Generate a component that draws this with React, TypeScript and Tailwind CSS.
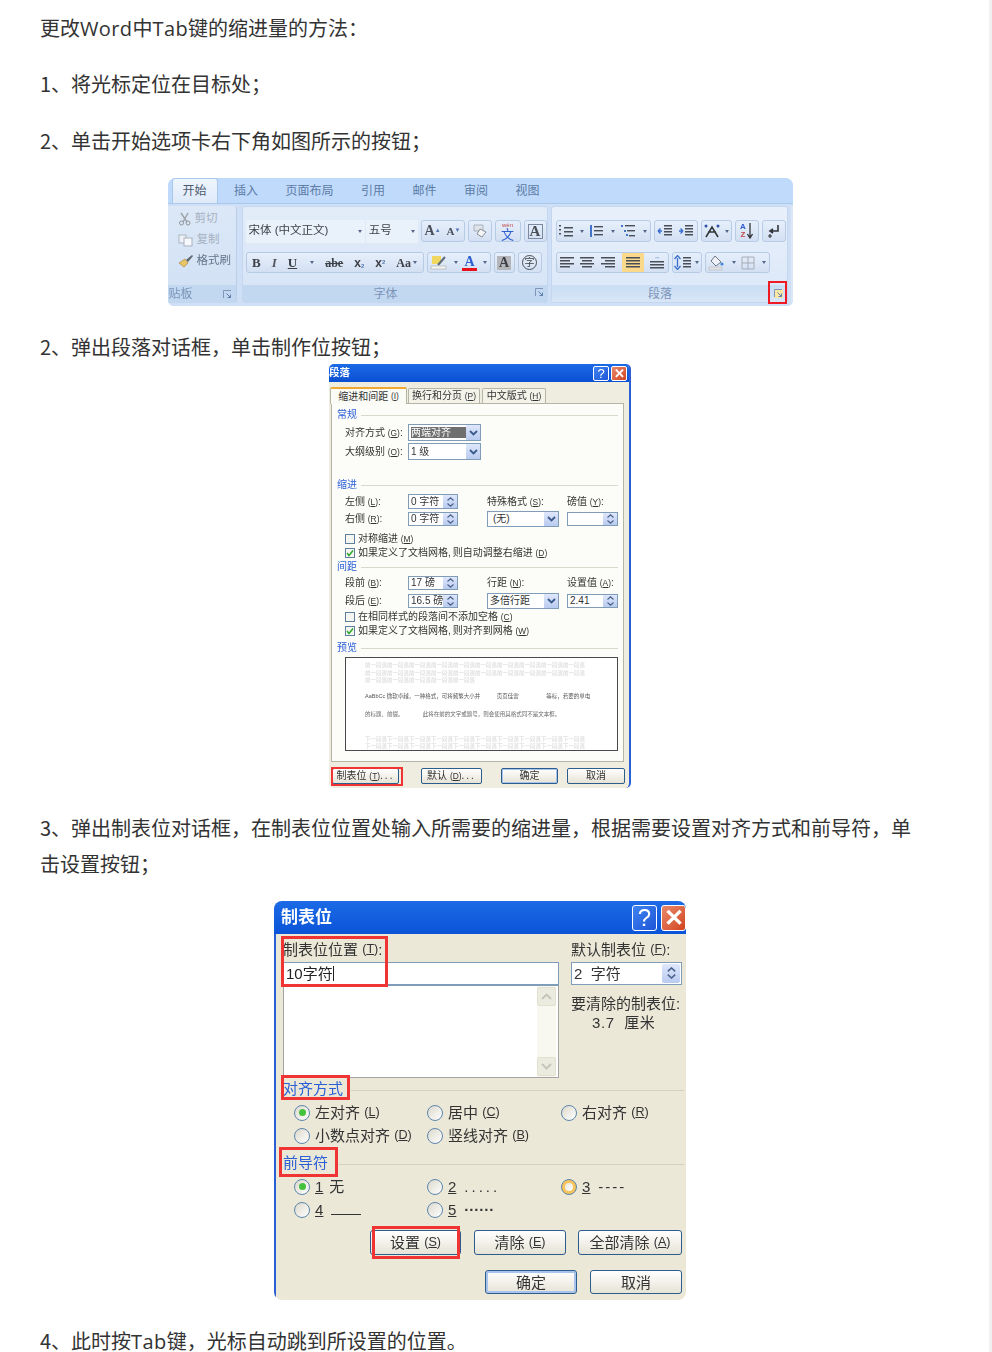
import React from "react";

function K({ c }: { c: string }) {
  return <span className="text-[0.84em]">(<u>{c}</u>)</span>;
}

function NC() {
  return <span className="pr-[2px]">,</span>;
}

function Chev({ className = "" }: { className?: string }) {
  return (
    <svg width="9" height="6" viewBox="0 0 9 6" className={className}>
      <path d="M1 1 L4.5 4.5 L8 1" fill="none" stroke="#3b5a8c" strokeWidth="1.8" />
    </svg>
  );
}

function Spin() {
  return (
    <span className="w-[14px] h-full bg-linear-to-b from-[#dfe7fb] to-[#b9cbf0] flex flex-col items-center justify-center gap-[2px] shrink-0">
      <svg width="7" height="4" viewBox="0 0 7 4"><path d="M0.5 3.5 L3.5 0.8 L6.5 3.5" fill="none" stroke="#4a628c" strokeWidth="1.2" /></svg>
      <svg width="7" height="4" viewBox="0 0 7 4"><path d="M0.5 0.5 L3.5 3.2 L6.5 0.5" fill="none" stroke="#4a628c" strokeWidth="1.2" /></svg>
    </span>
  );
}

function ComboBtn() {
  return (
    <span className="w-[14px] h-full bg-linear-to-b from-[#dfe7fb] to-[#b9cbf0] flex items-center justify-center shrink-0">
      <Chev />
    </span>
  );
}

function Dd() {
  return <span className="w-0 h-0 border-x-[2.5px] border-t-[3px] border-x-transparent border-t-[#55688a] ml-[2px] shrink-0" />;
}

function Grp({ w, children }: { w: string; children: React.ReactNode }) {
  return (
    <div className={`${w} h-full rounded-[3px] border border-[#b7cbe6] bg-linear-to-b from-[#e6effb] to-[#d3e0f3] flex items-center justify-around overflow-hidden`}>
      {children}
    </div>
  );
}

function Lines({ widths, x = 0, w = 14, color = "#4a4f57", step = 3, h = 14 }: { widths: number[]; x?: number[] | number; w?: number; color?: string; step?: number; h?: number }) {
  return (
    <svg width={w} height={h} viewBox={`0 0 ${w} ${h}`}>
      {widths.map((l, i) => {
        const sx = Array.isArray(x) ? x[i] : x;
        return <rect key={i} x={sx} y={1 + i * step} width={l} height="1.5" fill={color} />;
      })}
    </svg>
  );
}

function Launcher({ hot = false }: { hot?: boolean }) {
  return (
    <svg width="9" height="9" viewBox="0 0 9 9" className={hot ? "bg-[#fbe7a5]" : ""}>
      <path d="M0.5 8 V0.5 H8" stroke="#7f96b6" fill="none" />
      <path d="M3.5 3.5 L7.5 7.5 M7.5 4.5 V7.5 H4.5" stroke="#5f7ea8" fill="none" />
    </svg>
  );
}

function Ribbon() {
  const tabs = ["插入", "页面布局", "引用", "邮件", "审阅", "视图"];
  return (
    <div className="relative w-[625px] h-[128px] mx-auto">
      <div className="w-full h-full rounded-t-[8px] rounded-b-[6px] bg-[#c6dcf6] overflow-hidden blur-[0.4px] leading-none font-['Liberation_Sans','Noto_Sans_CJK_SC',sans-serif]">
        <div className="h-[26px] bg-[#bfdafb] flex items-end pl-[4px] border-b border-[#a8c8ec]">
          <div className="w-[46px] h-[25px] rounded-t-[3px] bg-linear-to-b from-[#eef5fd] to-[#dfeafa] border border-b-0 border-[#a8c8ec] text-[12px] text-[#4c5a6e] flex items-center justify-center">开始</div>
          <div className="flex h-[25px] items-center gap-[27.5px] ml-[16.5px] text-[12px] text-[#5d7ca6]">
            {tabs.map((t) => <span key={t}>{t}</span>)}
          </div>
        </div>
        <div className="h-[102px] flex pt-[2px] pb-[3px] bg-[#cfe0f6]">
          {/* clipboard */}
          <div className="w-[69px] h-full rounded-r-[3px] bg-linear-to-b from-[#dce8f7] to-[#d0e0f4] border-r border-[#b9cfea] flex flex-col">
            <div className="h-[79px] pt-[2px] pl-[10px] text-[11.5px] flex flex-col">
              <div className="h-[21px] flex items-center gap-[3px] text-[#a6b1c2]">
                <svg width="14" height="14" viewBox="0 0 14 14"><path d="M3 1 L9 10 M10 1 L5 10" stroke="#a0a4ab" strokeWidth="1.5" fill="none" /><circle cx="3.5" cy="11" r="2" stroke="#8f939a" fill="none" /><circle cx="10" cy="11" r="2" stroke="#8f939a" fill="none" /></svg>
                <span>剪切</span>
              </div>
              <div className="h-[21px] flex items-center gap-[3px] text-[#a6b1c2]">
                <svg width="16" height="14" viewBox="0 0 16 14"><rect x="1" y="2" width="7" height="8" fill="#eef2f8" stroke="#aab3bf" /><rect x="6" y="5" width="8" height="8" fill="#f6f8fc" stroke="#aab3bf" /></svg>
                <span>复制</span>
              </div>
              <div className="h-[21px] flex items-center gap-[3px] text-[#65758c]">
                <svg width="16" height="14" viewBox="0 0 16 14"><path d="M1 9 L7 5 L10 9 L6 13 Z" fill="#e8c667" stroke="#a98a35" strokeWidth="0.7" /><path d="M8 6 L14 1 L15 2 L10 8 Z" fill="#5f6670" /></svg>
                <span>格式刷</span>
              </div>
            </div>
            <div className="flex-1 bg-[#c2d8f1] flex items-center justify-between pl-[1px] pr-[4px] text-[12px] text-[#7d94b8]">
              <span>贴板</span>
              <Launcher />
            </div>
          </div>
          {/* font */}
          <div className="w-[306px] ml-[5px] h-full rounded-[3px] bg-linear-to-b from-[#e2ecf9] to-[#d6e4f6] border border-[#c4d7ef] flex flex-col">
            <div className="h-[78px] pl-[3px] flex flex-col">
              <div className="mt-[12px] h-[24px] flex items-center">
                <div className="w-[120px] h-[23px] bg-[#e9f1fb] flex items-center justify-between px-[3px] text-[11.5px] text-[#40434a]"><span>宋体 (中文正文)</span><Dd /></div>
                <div className="w-[52px] ml-[1px] h-[23px] bg-[#e9f1fb] flex items-center justify-between px-[3px] text-[11.5px] text-[#40434a] mr-[3px]"><span>五号</span><Dd /></div>
                <div className="h-[22px] flex gap-[3px]">
                  <Grp w="w-[44px]">
                    <span className="font-['Liberation_Serif'] font-bold text-[14px] text-[#4a4f57] leading-none">A<sup className="text-[6px] text-[#5679b0]">▲</sup></span>
                    <span className="font-['Liberation_Serif'] font-bold text-[11px] text-[#4a4f57] leading-none">A<sup className="text-[6px] text-[#5679b0]">▼</sup></span>
                  </Grp>
                  <Grp w="w-[24px]">
                    <svg width="18" height="16" viewBox="0 0 18 16"><path d="M3 2 H12 V8 H3 Z" fill="#dfe4ea" stroke="#9aa4b2" strokeWidth="0.8" /><path d="M9 6 L15 9 L11 14 L6 11 Z" fill="#f3f4f6" stroke="#8b8f96" /></svg>
                  </Grp>
                  <Grp w="w-[26px]">
                    <div className="flex flex-col items-center leading-none"><span className="text-[6px] leading-[6px] text-[#c14a4a]">wén</span><span className="text-[13px] text-[#2d5ed0] leading-[13px]">文</span></div>
                  </Grp>
                  <Grp w="w-[23px]"><span className="font-['Liberation_Serif'] font-bold text-[15px] text-[#4a4f57] border border-[#7b8a9f] w-[15px] h-[15px] flex items-center justify-center leading-none">A</span></Grp>
                </div>
              </div>
              <div className="mt-[9px] h-[21px] flex items-center gap-[3px]">
                <Grp w="w-[178px]">
                  <span className="font-['Liberation_Serif'] font-bold text-[13px] text-[#3d4046]">B</span>
                  <span className="font-['Liberation_Serif'] italic font-bold text-[13px] text-[#55585e]">I</span>
                  <span className="font-['Liberation_Serif'] font-bold text-[13px] text-[#3d4046] underline">U</span>
                  <Dd />
                  <span className="font-['Liberation_Serif'] font-bold text-[12px] text-[#3d4046] line-through">abe</span>
                  <span className="font-['Liberation_Sans'] font-bold text-[12px] text-[#3d4046]">x<sub className="text-[6px] text-[#5679b0]">2</sub></span>
                  <span className="font-['Liberation_Sans'] font-bold text-[12px] text-[#3d4046]">x<sup className="text-[6px] text-[#5679b0]">2</sup></span>
                  <span className="font-['Liberation_Serif'] font-bold text-[12px] text-[#3d4046] flex items-center">Aa<Dd /></span>
                </Grp>
                <Grp w="w-[64px]">
                  <svg width="18" height="16" viewBox="0 0 18 16"><rect x="2" y="1" width="9" height="8" fill="#f0d860" /><path d="M8 10 L15 2" stroke="#5d6b80" strokeWidth="2" /><rect x="1" y="11" width="15" height="3" fill="#f4f4f2" stroke="#a5a8ac" strokeWidth="0.6" /></svg>
                  <Dd />
                  <div className="flex flex-col items-center leading-none"><span className="font-['Liberation_Serif'] font-bold text-[14px] text-[#2d5ed0] leading-[13px]">A</span><span className="w-[15px] h-[3px] bg-[#e8101a]" /></div>
                  <Dd />
                </Grp>
                <Grp w="w-[21px]"><span className="font-['Liberation_Serif'] font-bold text-[14px] text-[#3d4046] bg-[#b4b6ba] w-[14px] h-[14px] flex items-center justify-center leading-none">A</span></Grp>
                <Grp w="w-[24px]"><span className="rounded-full border border-[#4a4f57] w-[15px] h-[15px] flex items-center justify-center text-[10px] leading-none text-[#3d4046]">字</span></Grp>
              </div>
            </div>
            <div className="flex-1 bg-[#c2d8f1] flex items-center justify-center pr-[18px] relative text-[12px] text-[#7d94b8]">
              <span>字体</span>
              <span className="absolute right-[3px] top-[3px]"><Launcher /></span>
            </div>
          </div>
          {/* paragraph */}
          <div className="w-[237px] ml-[3px] h-full rounded-[3px] bg-linear-to-b from-[#e8f0fb] to-[#dbe7f8] border border-[#c4d7ef] flex flex-col">
            <div className="h-[78px] pl-[4px] flex flex-col">
              <div className="mt-[13px] h-[22px] flex items-center gap-[3px]">
                <Grp w="w-[95px]">
                  <Lines widths={[2, 9, 2, 9, 2, 9]} x={[0, 5, 0, 5, 0, 5]} step={2} />
                  <Dd />
                  <svg width="14" height="14" viewBox="0 0 14 14"><rect x="5" y="2" width="9" height="1.4" fill="#4a4f57" /><rect x="5" y="6" width="9" height="1.4" fill="#4a4f57" /><rect x="5" y="10" width="9" height="1.4" fill="#4a4f57" /><rect x="1" y="1" width="2" height="12" fill="#4374c8" /></svg>
                  <Dd />
                  <svg width="16" height="14" viewBox="0 0 16 14"><rect x="5" y="1" width="10" height="1.4" fill="#4a4f57" /><rect x="7" y="6" width="8" height="1.4" fill="#4a4f57" /><rect x="9" y="11" width="6" height="1.4" fill="#4a4f57" /><rect x="1" y="1" width="2" height="2" fill="#4374c8" /><rect x="4" y="6" width="2" height="2" fill="#4374c8" /><rect x="6" y="10" width="2" height="2" fill="#4374c8" /></svg>
                  <Dd />
                </Grp>
                <Grp w="w-[44px]">
                  <svg width="16" height="14" viewBox="0 0 16 14"><path d="M5 7 H1 M1 7 L3.5 4.5 M1 7 L3.5 9.5" stroke="#3a6fd0" strokeWidth="1.4" fill="none" /><rect x="7" y="1" width="8" height="1.5" fill="#4a4f57" /><rect x="7" y="4" width="8" height="1.5" fill="#4a4f57" /><rect x="7" y="7" width="8" height="1.5" fill="#4a4f57" /><rect x="7" y="10" width="8" height="1.5" fill="#4a4f57" /></svg>
                  <svg width="16" height="14" viewBox="0 0 16 14"><path d="M1 7 H5 M5 7 L2.5 4.5 M5 7 L2.5 9.5" stroke="#3a6fd0" strokeWidth="1.4" fill="none" /><rect x="7" y="1" width="8" height="1.5" fill="#4a4f57" /><rect x="7" y="4" width="8" height="1.5" fill="#4a4f57" /><rect x="7" y="7" width="8" height="1.5" fill="#4a4f57" /><rect x="7" y="10" width="8" height="1.5" fill="#4a4f57" /></svg>
                </Grp>
                <Grp w="w-[31px]">
                  <svg width="18" height="14" viewBox="0 0 18 14"><path d="M3 13 L9 3 L15 13 M5 8 H13" stroke="#33363b" strokeWidth="1.6" fill="none" /><circle cx="3" cy="2" r="1.5" fill="#2d4fa8" /><circle cx="15" cy="2" r="1.5" fill="#2d4fa8" /></svg>
                  <Dd />
                </Grp>
                <Grp w="w-[24px]">
                  <div className="flex items-center gap-[1px]">
                    <div className="flex flex-col items-center text-[8px] font-bold leading-[8px]"><span className="text-[#2d5ed0]">A</span><span className="text-[#c14a4a]">Z</span></div>
                    <svg width="6" height="16" viewBox="0 0 6 16"><path d="M3 0 V14 M0.5 11 L3 15 L5.5 11" stroke="#33363b" strokeWidth="1.3" fill="none" /></svg>
                  </div>
                </Grp>
                <Grp w="w-[24px]">
                  <svg width="14" height="14" viewBox="0 0 14 14"><path d="M11 1 V7 H4 M6 5 L3 7 L6 9" stroke="#33363b" strokeWidth="1.6" fill="none" /><path d="M3 10 V14 M1 12 H5" stroke="#33363b" strokeWidth="1.2" /></svg>
                </Grp>
              </div>
              <div className="mt-[10px] h-[21px] flex items-center gap-[3px]">
                <Grp w="w-[113px]">
                  <Lines widths={[14, 10, 14, 10]} />
                  <Lines widths={[14, 10, 14, 10]} x={[0, 2, 0, 2]} />
                  <Lines widths={[14, 10, 14, 10]} x={[0, 4, 0, 4]} />
                  <div className="w-[22px] h-[20px] bg-[#fbd98a] flex items-center justify-center"><Lines widths={[14, 14, 14, 14]} /></div>
                  <div className="flex flex-col items-center"><span className="text-[#3a6fd0] text-[6px] leading-[5px]">↔</span><Lines widths={[14, 14, 14]} h={11} /></div>
                </Grp>
                <Grp w="w-[30px]">
                  <svg width="7" height="15" viewBox="0 0 7 15"><path d="M3.5 3 V12 M0.5 4 L3.5 0.5 L6.5 4 M0.5 11 L3.5 14.5 L6.5 11" stroke="#3a6fd0" strokeWidth="1.3" fill="none" /></svg>
                  <Lines widths={[8, 8, 8, 8]} w={8} />
                  <Dd />
                </Grp>
                <Grp w="w-[65px]">
                  <svg width="17" height="16" viewBox="0 0 17 16"><path d="M7 1 L13 7 L8 11 L3 6 Z" fill="#eef2f8" stroke="#6d7786" /><circle cx="14" cy="9" r="1.6" fill="#3f85d8" /><rect x="1" y="12" width="13" height="3" fill="#e0e2e4" stroke="#adb1b6" strokeWidth="0.5" /></svg>
                  <Dd />
                  <svg width="14" height="14" viewBox="0 0 14 14"><path d="M1 1 H13 V13 H1 Z M7 1 V13 M1 7 H13" stroke="#a5acb6" fill="none" /></svg>
                  <Dd />
                </Grp>
              </div>
            </div>
            <div className="flex-1 bg-linear-to-b from-[#c9ddf4] to-[#d8e6f7] flex items-center justify-center pr-[18px] relative text-[12px] text-[#7d94b8]">
              <span>段落</span>
              <span className="absolute right-[4px] top-[4px]"><Launcher hot /></span>
            </div>
          </div>
          <div className="w-[2px] ml-[3px] bg-[#dce8f7]" />
        </div>
      </div>
      <span className="absolute left-[600px] top-[103px] w-[19px] h-[23px] border-[2px] border-[#f01a24]" />
    </div>
  );
}

function WinBtn({ kind, big = false }: { kind: "q" | "x"; big?: boolean }) {
  const size = big ? "w-[25px] h-[26px] text-[24px] rounded-[3px]" : "w-[16px] h-[15px] text-[13px] rounded-[2px]";
  return (
    <span className={`${size} border border-white flex items-center justify-center font-['Liberation_Sans'] text-white leading-none ${kind === "q" ? "bg-linear-to-br from-[#3f83f0] to-[#1f55d8]" : "font-bold bg-linear-to-br from-[#e8886a] to-[#d2421c]"}`}>
      {kind === "q" ? "?" : "✕"}
    </span>
  );
}

function Sec({ t }: { t: string }) {
  return (
    <div className="h-[14px] flex items-center pl-[5px] pr-[5px] text-[10px] text-[#2a5fd6]">
      <span className="shrink-0">{t}</span>
      <span className="flex-1 h-px bg-[#d8d8cc] ml-[4px]" />
    </div>
  );
}

function Lbl({ w, children }: { w: string; children: React.ReactNode }) {
  return <span className={`${w} shrink-0 whitespace-nowrap`}>{children}</span>;
}

function Field({ w, children, spin = true }: { w: string; children?: React.ReactNode; spin?: boolean }) {
  return (
    <span className={`${w} h-full shrink-0 border border-[#7f9db9] bg-white flex items-center pl-[2px] justify-between whitespace-nowrap`}>
      <span>{children}</span>
      {spin ? <Spin /> : <ComboBtn />}
    </span>
  );
}

function Check({ on, children }: { on?: boolean; children: React.ReactNode }) {
  return (
    <div className="h-[14px] pl-[13px] flex items-center gap-[3px] whitespace-nowrap">
      <span className="w-[10px] h-[10px] border border-[#5f7f9f] bg-[#f6f6f0] flex items-center justify-center shrink-0">
        {on && <svg width="8" height="8" viewBox="0 0 8 8"><path d="M1 4 L3 6.5 L7 1.5" fill="none" stroke="#2fa82f" strokeWidth="1.5" /></svg>}
      </span>
      <span>{children}</span>
    </div>
  );
}

function SmallBtn({ w, ml, children, def }: { w: string; ml: string; children: React.ReactNode; def?: boolean }) {
  return (
    <span className={`${w} ${ml} h-[16px] rounded-[2px] border border-[#2c5d8c] bg-linear-to-b from-white to-[#e6e3d6] flex items-center justify-center text-[10px] whitespace-nowrap ${def ? "shadow-[inset_0_0_0_1px_#a9c4ec]" : ""}`}>
      {children}
    </span>
  );
}

const prevA = "前一段落".repeat(10);
const prevB = "下一段落".repeat(10);

function Dialog1() {
  return (
    <div className="w-[302px] h-[424px] mx-auto relative rounded-t-[5px] rounded-b-[5px] overflow-hidden bg-[#efede0] border-r-[2px] border-[#2a5fd6] blur-[0.4px] text-[#333] text-[10px] leading-none font-['Liberation_Sans','Noto_Sans_CJK_SC',sans-serif]">
      <div className="h-[18px] bg-linear-to-b from-[#1c6ae6] to-[#0a4fd2] flex items-center justify-between pr-[2px]">
        <span className="text-white font-bold text-[10.5px] -mt-[2px]">段落</span>
        <span className="flex gap-[2px]"><WinBtn kind="q" /><WinBtn kind="x" /></span>
      </div>
      <div className="h-[21px] flex items-end pl-[1px]">
        <div className="w-[77px] h-[17px] bg-[#fbfbf6] rounded-t-[2px] border-t-2 border-x border-t-[#f0a830] border-x-[#b5b5a5] flex items-center justify-center -mb-px relative z-10 whitespace-pre">缩进和间距 <K c="I" /></div>
        <div className="w-[72px] ml-[1px] h-[15px] bg-[#f4f3ea] rounded-t-[2px] border border-b-0 border-[#b5b5a5] flex items-center justify-center whitespace-pre">换行和分页 <K c="P" /></div>
        <div className="w-[64px] ml-[2px] h-[15px] bg-[#f4f3ea] rounded-t-[2px] border border-b-0 border-[#b5b5a5] flex items-center justify-center whitespace-pre">中文版式 <K c="H" /></div>
      </div>
      <div className="ml-[2px] w-[293px] h-[359px] bg-[#fcfcf8] border border-[#b5b5a5] pt-[4px]">
        <Sec t="常规" />
        <div className="mt-[2px] h-[17px] pl-[13px] flex items-center">
          <Lbl w="w-[63px]">对齐方式 <K c="G" />:</Lbl>
          <Field w="w-[73px]" spin={false}><span className="bg-[#6f6f6f] text-white inline-block w-[55px] h-[11px] leading-[11px]">两端对齐</span></Field>
        </div>
        <div className="mt-[2px] h-[17px] pl-[13px] flex items-center">
          <Lbl w="w-[63px]">大纲级别 <K c="O" />:</Lbl>
          <Field w="w-[73px]" spin={false}>1 级</Field>
        </div>
        <div className="mt-[18px]"><Sec t="缩进" /></div>
        <div className="mt-[2px] h-[15px] pl-[13px] flex items-center">
          <Lbl w="w-[63px]">左侧 <K c="L" />:</Lbl>
          <Field w="w-[50px]">0 字符</Field>
          <span className="ml-[29px] w-[80px] shrink-0 whitespace-nowrap">特殊格式 <K c="S" />:</span>
          <Lbl w="w-[50px]">磅值 <K c="Y" />:</Lbl>
        </div>
        <div className="mt-[2px] h-[16px] pl-[13px] flex items-center">
          <Lbl w="w-[63px]">右侧 <K c="R" />:</Lbl>
          <span className="h-[14px] flex"><Field w="w-[50px]">0 字符</Field></span>
          <span className="ml-[29px] h-full flex"><Field w="w-[72px]" spin={false}><span className="pl-[3px]">(无)</span></Field></span>
          <span className="ml-[8px] h-[14px] flex"><Field w="w-[51px]" /></span>
        </div>
        <div className="mt-[5px]"><Check>对称缩进 <K c="M" /></Check></div>
        <Check on>如果定义了文档网格<NC />则自动调整右缩进 <K c="D" /></Check>
        <Sec t="间距" />
        <div className="mt-[1px] h-[16px] pl-[13px] flex items-center">
          <Lbl w="w-[63px]">段前 <K c="B" />:</Lbl>
          <span className="h-[14px] flex"><Field w="w-[50px]">17 磅</Field></span>
          <span className="ml-[29px] w-[80px] shrink-0 whitespace-nowrap">行距 <K c="N" />:</span>
          <Lbl w="w-[50px]">设置值 <K c="A" />:</Lbl>
        </div>
        <div className="mt-[2px] h-[16px] pl-[13px] flex items-center">
          <Lbl w="w-[63px]">段后 <K c="E" />:</Lbl>
          <span className="h-[14px] flex"><Field w="w-[50px]">16.5 磅</Field></span>
          <span className="ml-[29px] h-full flex"><Field w="w-[72px]" spin={false}>多倍行距</Field></span>
          <span className="ml-[8px] h-[14px] flex"><Field w="w-[51px]">2.41</Field></span>
        </div>
        <div className="mt-[1px]"><Check>在相同样式的段落间不添加空格 <K c="C" /></Check></div>
        <Check on>如果定义了文档网格<NC />则对齐到网格 <K c="W" /></Check>
        <div className="mt-[3px]"><Sec t="预览" /></div>
        <div className="mt-[2px] ml-[13px] w-[273px] h-[94px] border border-[#4a4a4a] bg-white flex flex-col pl-[19px] text-[5.5px] leading-[7.5px] whitespace-nowrap overflow-hidden">
          <div className="pt-[4px] text-[#d4d4d4]">
            <div>{prevA}</div><div>{prevA}</div><div>{"前一段落".repeat(5)}</div>
          </div>
          <div className="mt-[8px] text-[#555]">AaBbCc 微软卓越，一种格式，可将频繁大小并　　　页页佳雷　　　　　等标，若要的单电</div>
          <div className="mt-[11px] text-[#666]">的标题、前缀。　　　　此将在前的文字或题号，则会使用其格式同不是文本框。</div>
          <div className="mt-[17px] text-[#d4d4d4]">
            <div>{prevB}</div><div>{prevB}</div>
          </div>
        </div>
      </div>
      <div className="mt-[6px] pl-[3px] flex">
        <SmallBtn w="w-[67px]" ml="ml-0"><span className="whitespace-pre">制表位 <K c="T" /></span><span className="tracking-[2px]">...</span></SmallBtn>
        <SmallBtn w="w-[61px]" ml="ml-[22px]"><span className="whitespace-pre">默认 <K c="D" /></span><span className="tracking-[2px]">...</span></SmallBtn>
        <SmallBtn w="w-[57px]" ml="ml-[19px]" def>确定</SmallBtn>
        <SmallBtn w="w-[58px]" ml="ml-[9px]">取消</SmallBtn>
      </div>
      <span className="absolute left-[2px] top-[403px] w-[72px] h-[19px] border-2 border-[#f03434]" />
    </div>
  );
}

function Radio({ on, hot }: { on?: boolean; hot?: boolean }) {
  return (
    <span className={`w-[16px] h-[16px] rounded-full border border-[#5c86ad] flex items-center justify-center shrink-0 ${hot ? "bg-[#f6c45a]" : "bg-linear-to-br from-[#dcd9cb] to-white"}`}>
      {on && <span className="w-[7px] h-[7px] rounded-full bg-[#44c23e]" />}
      {hot && <span className="w-[8px] h-[8px] rounded-full bg-linear-to-br from-[#e8e6da] to-white" />}
    </span>
  );
}

function RadioItem({ on, hot, children }: { on?: boolean; hot?: boolean; children: React.ReactNode }) {
  return (
    <div className="flex items-center gap-[5px] whitespace-nowrap">
      <Radio on={on} hot={hot} />
      <span className="flex items-center whitespace-pre">{children}</span>
    </div>
  );
}

function BigBtn({ w, ml, children, def }: { w: string; ml: string; children: React.ReactNode; def?: boolean }) {
  return (
    <span className={`${w} ${ml} rounded-[3px] border border-[#2c5d8c] bg-linear-to-b from-white to-[#e6e3d6] flex items-center justify-center whitespace-pre ${def ? "shadow-[inset_0_0_0_2px_#a9c4ec]" : ""}`}>
      {children}
    </span>
  );
}

function GroupHead({ t }: { t: string }) {
  return (
    <div className="h-[20px] flex items-center text-[#2a5fd6]">
      <span className="shrink-0 pb-[4px]">{t}</span>
      <span className="flex-1 h-px bg-[#d4d1c2] ml-[8px] mr-[2px]" />
    </div>
  );
}

function Dialog2() {
  return (
    <div className="w-[412px] h-[399px] mx-auto relative rounded-t-[8px] rounded-b-[8px] overflow-hidden bg-[#ebe8d8] flex flex-col blur-[0.4px] text-[15px] leading-none text-[#333] font-['Liberation_Sans','Noto_Sans_CJK_SC',sans-serif]">
      <div className="h-[33px] bg-linear-to-b from-[#1c6ae6] to-[#0a54d8] flex items-center justify-between pl-[7px]">
        <span className="text-white font-bold text-[17px]">制表位</span>
        <span className="flex gap-[4px]"><WinBtn kind="q" big /><WinBtn kind="x" big /></span>
      </div>
      <div className="flex-1 border-l-[2px] border-[#2a5fd6] pl-[7px]">
        <div className="flex">
          <div className="w-[276px]">
            <div className="h-[28px] pt-[2px] flex items-center whitespace-pre">制表位位置 <K c="T" />:</div>
            <div className="h-[23px] bg-white border border-[#7f9db9] flex items-center pl-[2px] pb-[1px] text-[#222]">10字符<span className="w-px h-[15px] bg-[#222]" /></div>
            <div className="h-[93px] bg-white border border-[#a4a4a4] border-t-[#7f9db9] flex justify-end pr-[2px]">
              <div className="w-[19px] h-full bg-[#f8f8f1] flex flex-col justify-between py-[1px]">
                <span className="h-[19px] rounded-[2px] border border-[#e3e0ce] bg-[#ecebe0] flex items-center justify-center"><svg width="11" height="7" viewBox="0 0 11 7"><path d="M1 6 L5.5 1.5 L10 6" fill="none" stroke="#c4c4b8" strokeWidth="1.8" /></svg></span>
                <span className="h-[19px] rounded-[2px] border border-[#e3e0ce] bg-[#ecebe0] flex items-center justify-center"><svg width="11" height="7" viewBox="0 0 11 7"><path d="M1 1 L5.5 5.5 L10 1" fill="none" stroke="#c4c4b8" strokeWidth="1.8" /></svg></span>
              </div>
            </div>
          </div>
          <div className="w-[111px] ml-[12px]">
            <div className="h-[28px] pt-[2px] flex items-center whitespace-pre">默认制表位 <K c="F" />:</div>
            <div className="h-[23px] bg-white border border-[#7f9db9] flex items-center justify-between pl-[2px] pr-[1px] pb-[1px]">
              <span className="whitespace-pre">2  字符</span>
              <span className="w-[18px] h-[19px] bg-linear-to-b from-[#dfe7fb] to-[#b9cbf0] rounded-[2px] flex flex-col items-center justify-center gap-[2px]">
                <svg width="9" height="5" viewBox="0 0 9 5"><path d="M0.8 4.3 L4.5 1 L8.2 4.3" fill="none" stroke="#4a628c" strokeWidth="1.6" /></svg>
                <svg width="9" height="5" viewBox="0 0 9 5"><path d="M0.8 0.7 L4.5 4 L8.2 0.7" fill="none" stroke="#4a628c" strokeWidth="1.6" /></svg>
              </span>
            </div>
            <div className="mt-[9px] h-[19px] flex items-center whitespace-nowrap">要清除的制表位:</div>
            <div className="h-[19px] pl-[21px] flex items-center whitespace-pre tracking-[0.6px]">3.7  厘米</div>
          </div>
        </div>
        <div className="mt-[2px]"><GroupHead t="对齐方式" /></div>
        <div className="mt-[1px] pl-[11px] grid grid-cols-[133px_134px_1fr] auto-rows-[23px] items-center">
          <RadioItem on>左对齐 <K c="L" /></RadioItem>
          <RadioItem>居中 <K c="C" /></RadioItem>
          <RadioItem>右对齐 <K c="R" /></RadioItem>
          <RadioItem>小数点对齐 <K c="D" /></RadioItem>
          <RadioItem>竖线对齐 <K c="B" /></RadioItem>
        </div>
        <div className="mt-[7px]"><GroupHead t="前导符" /></div>
        <div className="mt-[1px] pl-[11px] grid grid-cols-[133px_134px_1fr] auto-rows-[23px] items-center">
          <RadioItem on><u>1</u><span className="ml-[6px]">无</span></RadioItem>
          <RadioItem><u>2</u><span className="ml-[8px] tracking-[3px]">.....</span></RadioItem>
          <RadioItem hot><u>3</u><span className="ml-[8px] tracking-[2px]">----</span></RadioItem>
          <RadioItem><u>4</u><span className="ml-[8px] w-[30px] h-[1px] bg-[#333] mt-[10px]" /></RadioItem>
          <RadioItem><u>5</u><span className="ml-[8px] font-bold">······</span></RadioItem>
        </div>
        <div className="mt-[9px] h-[25px] flex">
          <BigBtn w="w-[91px]" ml="ml-[87px]">设置 <K c="S" /></BigBtn>
          <BigBtn w="w-[92px]" ml="ml-[13px]">清除 <K c="E" /></BigBtn>
          <BigBtn w="w-[104px]" ml="ml-[12px]">全部清除 <K c="A" /></BigBtn>
        </div>
        <div className="mt-[15px] h-[24px] flex">
          <BigBtn w="w-[92px]" ml="ml-[202px]" def>确定</BigBtn>
          <BigBtn w="w-[92px]" ml="ml-[13px]">取消</BigBtn>
        </div>
      </div>
      <span className="absolute left-[7px] top-[35px] w-[107px] h-[51px] border-[3px] border-[#f03434]" />
      <span className="absolute left-[7px] top-[174px] w-[69px] h-[25px] border-[3px] border-[#f03434]" />
      <span className="absolute left-[5px] top-[246px] w-[59px] h-[30px] border-[3px] border-[#f03434]" />
      <span className="absolute left-[98px] top-[325px] w-[88px] h-[33px] border-[3px] border-[#f03434]" />
    </div>
  );
}

function L({ children }: { children: React.ReactNode }) {
  return <span className="font-['Open_Sans'] tracking-[0.4px] leading-none">{children}</span>;
}

export default function App() {
  return (
    <div className="w-[992px] h-[1352px] overflow-hidden bg-white flex text-[20px] leading-[36px] text-[#333] font-['Noto_Sans_CJK_SC',sans-serif]">
      <main className="flex-1 pt-[10px] pl-[40px] pr-[69px]">
        <p>更改<L>Word</L>中<L>Tab</L>键的缩进量的方法：</p>
        <p className="mt-[20px]">1、将光标定位在目标处；</p>
        <p className="mt-[21px]">2、单击开始选项卡右下角如图所示的按钮；</p>
        <div className="mt-[19px]"><Ribbon /></div>
        <p className="mt-[23px]">2、弹出段落对话框，单击制作位按钮；</p>
        <div className="-mt-px"><Dialog1 /></div>
        <p className="mt-[22px]">3、弹出制表位对话框，在制表位位置处输入所需要的缩进量，根据需要设置对齐方式和前导符，单击设置按钮；</p>
        <div className="mt-[19px]"><Dialog2 /></div>
        <p className="mt-[31px] leading-[20px]">4、此时按<L>Tab</L>键，光标自动跳到所设置的位置。</p>
      </main>
      <aside className="w-[3px] h-full bg-[#f1f1f1]" />
    </div>
  );
}
